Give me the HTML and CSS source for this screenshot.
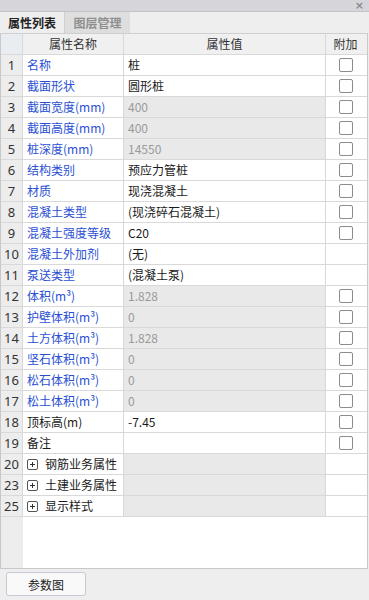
FILE: index.html
```html
<!DOCTYPE html>
<html>
<head>
<meta charset="utf-8">
<link rel="stylesheet" href="styles.css">
</head>
<body>
<div class="panel">
  <div class="titlebar"><span class="close">×</span></div>
  <div class="tabs">
    <div class="tab active">属性列表</div>
    <div class="tab">图层管理</div>
  </div>
  <div class="grid">
    <div class="row head">
      <div class="c num"></div>
      <div class="c name center">属性名称</div>
      <div class="c val center">属性值</div>
      <div class="c add center">附加</div>
    </div>
    <div class="row"><div class="c num">1</div><div class="c name blue">名称</div><div class="c val">桩</div><div class="c add"><i class="cb"></i></div></div>
    <div class="row"><div class="c num">2</div><div class="c name blue">截面形状</div><div class="c val">圆形桩</div><div class="c add"><i class="cb"></i></div></div>
    <div class="row"><div class="c num">3</div><div class="c name blue">截面宽度(mm)</div><div class="c val ro">400</div><div class="c add"><i class="cb"></i></div></div>
    <div class="row"><div class="c num">4</div><div class="c name blue">截面高度(mm)</div><div class="c val ro">400</div><div class="c add"><i class="cb"></i></div></div>
    <div class="row"><div class="c num">5</div><div class="c name blue">桩深度(mm)</div><div class="c val ro">14550</div><div class="c add"><i class="cb"></i></div></div>
    <div class="row"><div class="c num">6</div><div class="c name blue">结构类别</div><div class="c val">预应力管桩</div><div class="c add"><i class="cb"></i></div></div>
    <div class="row"><div class="c num">7</div><div class="c name blue">材质</div><div class="c val">现浇混凝土</div><div class="c add"><i class="cb"></i></div></div>
    <div class="row"><div class="c num">8</div><div class="c name blue">混凝土类型</div><div class="c val">(现浇碎石混凝土)</div><div class="c add"><i class="cb"></i></div></div>
    <div class="row"><div class="c num">9</div><div class="c name blue">混凝土强度等级</div><div class="c val">C20</div><div class="c add"><i class="cb"></i></div></div>
    <div class="row"><div class="c num">10</div><div class="c name blue">混凝土外加剂</div><div class="c val">(无)</div><div class="c add"></div></div>
    <div class="row"><div class="c num">11</div><div class="c name blue">泵送类型</div><div class="c val">(混凝土泵)</div><div class="c add"></div></div>
    <div class="row"><div class="c num">12</div><div class="c name blue">体积(m³)</div><div class="c val ro">1.828</div><div class="c add"><i class="cb"></i></div></div>
    <div class="row"><div class="c num">13</div><div class="c name blue">护壁体积(m³)</div><div class="c val ro">0</div><div class="c add"><i class="cb"></i></div></div>
    <div class="row"><div class="c num">14</div><div class="c name blue">土方体积(m³)</div><div class="c val ro">1.828</div><div class="c add"><i class="cb"></i></div></div>
    <div class="row"><div class="c num">15</div><div class="c name blue">坚石体积(m³)</div><div class="c val ro">0</div><div class="c add"><i class="cb"></i></div></div>
    <div class="row"><div class="c num">16</div><div class="c name blue">松石体积(m³)</div><div class="c val ro">0</div><div class="c add"><i class="cb"></i></div></div>
    <div class="row"><div class="c num">17</div><div class="c name blue">松土体积(m³)</div><div class="c val ro">0</div><div class="c add"><i class="cb"></i></div></div>
    <div class="row"><div class="c num">18</div><div class="c name">顶标高(m)</div><div class="c val">-7.45</div><div class="c add"><i class="cb"></i></div></div>
    <div class="row"><div class="c num">19</div><div class="c name">备注</div><div class="c val"></div><div class="c add"><i class="cb"></i></div></div>
    <div class="row"><div class="c num">20</div><div class="c name"><i class="plus"></i>钢筋业务属性</div><div class="c val ro"></div><div class="c add"></div></div>
    <div class="row"><div class="c num">23</div><div class="c name"><i class="plus"></i>土建业务属性</div><div class="c val ro"></div><div class="c add"></div></div>
    <div class="row"><div class="c num">25</div><div class="c name"><i class="plus"></i>显示样式</div><div class="c val ro"></div><div class="c add"></div></div>
    <div class="filler"><div class="fnum"></div><div class="fbody"></div></div>
  </div>
  <div class="bottom">
    <button class="btn">参数图</button>
  </div>
</div>
</body>
</html>
```

FILE: styles.css
```css
* { box-sizing: border-box; }
html, body { margin: 0; padding: 0; }
body {
  width: 369px;
  height: 600px;
  background: #eeeeee;
  font-family: "Noto Sans CJK SC", "Noto Sans", sans-serif;
  font-size: 12px;
  color: #1a1a1a;
  overflow: hidden;
}
.panel { display: flex; flex-direction: column; height: 600px; }
.titlebar {
  height: 12px;
  background: #d6d6da;
  border-bottom: 1px solid #c3c3c7;
  display: flex;
  justify-content: flex-end;
  align-items: center;
  padding-right: 5px;
}
.close { color: #8a8a8e; font-size: 11px; line-height: 11px; font-family: "DejaVu Sans", sans-serif; font-weight: bold; }
.tabs {
  height: 21px;
  display: flex;
  background: #eeeeee;
}
.tab {
  width: 66px;
  display: flex;
  align-items: center;
  justify-content: center;
  color: #8f8f8f;
  background: #dedede;
  font-weight: bold;
  border-left: 1px solid #cfcfcf;
}
.tab.active {
  width: 64px;
  color: #222;
  background: #eeeeee;
  border-left: none;
}
.grid {
  flex: 1;
  display: flex;
  flex-direction: column;
  border-top: 1px solid #cfcfcf;
  border-left: 1px solid #c8c8c8;
  border-right: 1px solid #c8c8c8;
  border-bottom: 1px solid #c8c8c8;
  width: 368px;
  background: #ffffff;
}
.row {
  display: grid;
  grid-template-columns: 22px 101px 202px 41px;
  height: 21px;
}
.c {
  border-right: 1px solid #d9d9d9;
  border-bottom: 1px solid #d9d9d9;
  display: flex;
  align-items: center;
  padding-left: 4px;
  white-space: nowrap;
  overflow: hidden;
  background: #ffffff;
  line-height: 20px;
}
.c.add { border-right: none; justify-content: center; padding-left: 0; padding-right: 2px; }
.c.num {
  background: #ededed;
  justify-content: center;
  padding-left: 0;
  color: #333;
  font-family: "Noto Sans", sans-serif;
  font-size: 13px;
}
.head .c { background: #f0f0f0; color: #333; }
.head .c.num { background: #e9ecf1; }
.center { justify-content: center; padding-left: 0; }
.blue { color: #2a4fd4; }
.val.ro { background: #e9e9e9; color: #9a9a9a; }
.cb {
  display: block;
  width: 14px;
  height: 14px;
  border: 1px solid #8c8c8c;
  border-radius: 2px;
  background: #fff;
}
.plus {
  position: relative;
  display: inline-block;
  width: 11px;
  height: 11px;
  border: 1px solid #555;
  border-radius: 2px;
  margin-right: 7px;
}
.plus::before, .plus::after {
  content: "";
  position: absolute;
  background: #333;
}
.plus::before { left: 2px; top: 4px; width: 5px; height: 1px; }
.plus::after { left: 4px; top: 2px; width: 1px; height: 5px; }
.filler { flex: 1; display: flex; }
.fnum { width: 22px; background: #ededed; }
.fbody { flex: 1; background: #fff; }
.bottom {
  height: 31px;
  padding: 3px 6px;
  display: flex;
  align-items: flex-start;
  background: #eeeeee;
}
.btn {
  width: 80px;
  height: 24px;
  border: 1px solid #c4cad6;
  border-radius: 3px;
  background: #f9f9fa;
  font-family: "Noto Sans CJK SC", sans-serif;
  font-size: 12px;
  color: #222;
  padding: 0;
}
```
